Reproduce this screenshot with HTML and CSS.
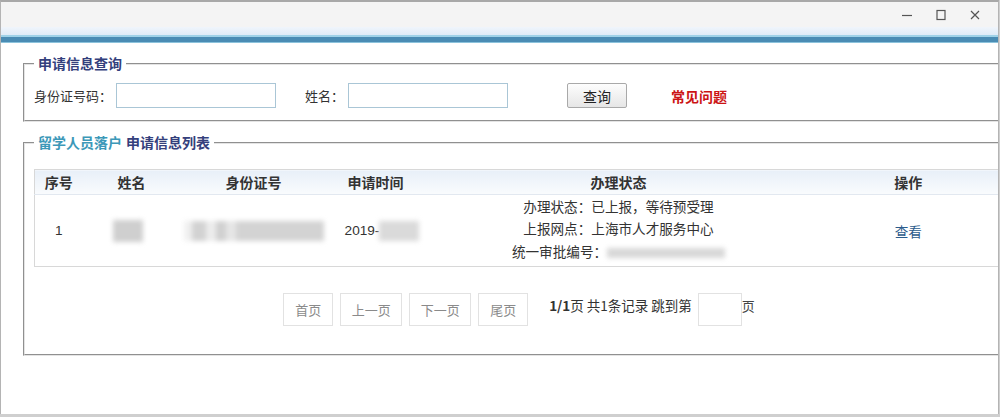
FILE: index.html
```html
<!DOCTYPE html>
<html lang="zh-CN">
<head>
    <meta charset="UTF-8">
    <title>申请信息查询</title>
    <link rel="stylesheet" href="styles.css">
</head>
<body>
<div class="window">
    <div class="titlebar">
        <span class="ctl">
            <svg width="12" height="12" viewBox="0 0 12 12"><path d="M1 6.5h10" stroke="#555" stroke-width="1.2"/></svg>
        </span>
        <span class="ctl">
            <svg width="12" height="12" viewBox="0 0 12 12"><rect x="2" y="1.5" width="8" height="9" fill="none" stroke="#555" stroke-width="1.2"/></svg>
        </span>
        <span class="ctl">
            <svg width="12" height="12" viewBox="0 0 12 12"><path d="M2 2l8 8M10 2l-8 8" stroke="#555" stroke-width="1.2"/></svg>
        </span>
    </div>
    <div class="strip"></div>
    <div class="bluebar"></div>

    <div class="content">
        <fieldset class="box">
            <legend><span class="dark">申请信息查询</span></legend>
            <div class="query-row">
                <label for="idno">身份证号码：</label>
                <input type="text" id="idno" class="txt">
                <label for="name" class="name-label">姓名：</label>
                <input type="text" id="name" class="txt">
                <button class="btn-query">查询</button>
                <a class="faq">常见问题</a>
            </div>
        </fieldset>

        <fieldset class="box list-box">
            <legend><span class="teal">留学人员落户</span> <span class="dark">申请信息列表</span></legend>
            <table class="grid">
                <colgroup>
                    <col style="width:48px">
                    <col style="width:98px">
                    <col style="width:146px">
                    <col style="width:98px">
                    <col style="width:388px">
                    <col style="width:192px">
                </colgroup>
                <thead>
                    <tr>
                        <th>序号</th>
                        <th>姓名</th>
                        <th>身份证号</th>
                        <th>申请时间</th>
                        <th>办理状态</th>
                        <th>操作</th>
                    </tr>
                </thead>
                <tbody>
                    <tr>
                        <td>1</td>
                        <td><span class="blur blur-name"></span></td>
                        <td><span class="blur blur-id"></span></td>
                        <td class="date">2019-<span class="blur blur-date"></span></td>
                        <td class="status">
                            办理状态：已上报，等待预受理<br>
                            上报网点：上海市人才服务中心<br>
                            统一审批编号：<span class="blur blur-no"></span>
                        </td>
                        <td><a class="view">查看</a></td>
                    </tr>
                </tbody>
            </table>

            <div class="pager">
                <button class="pg-btn pg-2">首页</button>
                <button class="pg-btn pg-3">上一页</button>
                <button class="pg-btn pg-3">下一页</button>
                <button class="pg-btn pg-2">尾页</button>
                <span class="pg-info"><b>1/1</b>页 共1条记录 跳到第</span>
                <input type="text" class="pg-jump">
                <span class="pg-unit">页</span>
            </div>
        </fieldset>
    </div>
</div>
</body>
</html>
```

FILE: styles.css
```css
body {
    margin: 0;
    background: #cfcfcf;
    font-family: "Liberation Sans", "Noto Sans CJK SC", sans-serif;
    font-size: 13px;
    color: #333;
}

.window {
    width: 997px;
    height: 412px;
    border-top: 2px solid #a8a8a8;
    border-left: 1px solid #b4b4b4;
    border-right: 1px solid #b4b4b4;
    background: #fff;
    overflow: hidden;
}

.titlebar {
    height: 25px;
    background: #f4f4f4;
    display: flex;
    justify-content: flex-end;
    align-items: center;
    padding-right: 6px;
}

.ctl {
    width: 34px;
    display: flex;
    justify-content: center;
}

.strip {
    height: 8px;
    background: linear-gradient(#f0f5fb, #dfebf7);
}

.bluebar {
    height: 5px;
    border-top: 2px solid #9fd2e8;
    border-bottom: 1px solid #8cc3dc;
    background: #4a8cb4;
}

.content {
    padding: 11px 0 0 22px;
}

.box {
    width: 1000px;
    margin: 0;
    padding: 9px 0 12px 9px;
    border: 2px groove #e4e4e4;
    box-sizing: border-box;
}

.box legend {
    padding: 0 4px;
    font-size: 14px;
    font-weight: bold;
    line-height: 20px;
}

.dark {
    color: #34407c;
}

.teal {
    color: #3c98b8;
}

.query-row {
    display: flex;
    align-items: center;
    height: 25px;
}

.query-row label {
    font-family: "Noto Sans CJK SC", sans-serif;
}

.txt {
    width: 160px;
    height: 25px;
    box-sizing: border-box;
    border: 1px solid #aac6d6;
    margin: 0 0 0 4px;
    padding: 0 4px;
}

.name-label {
    margin-left: 29px;
}

.btn-query {
    margin-left: 59px;
    width: 60px;
    height: 25px;
    font-family: "Noto Sans CJK SC", sans-serif;
    font-size: 14px;
    color: #222;
    background: linear-gradient(#fdfdfd, #e6e6e6);
    border: 1px solid #a9a9a9;
    border-radius: 2px;
    padding: 0;
}

.faq {
    margin-left: 44px;
    color: #cc1414;
    font-weight: bold;
    font-size: 14px;
}

.list-box {
    margin-top: 11px;
    padding: 16px 0 28px 9px;
}

.grid {
    width: 970px;
    border-collapse: collapse;
    table-layout: fixed;
    border: 1px solid #d8d8d8;
}

.grid th {
    height: 24px;
    padding: 0;
    font-size: 14px;
    color: #333;
    background: linear-gradient(#e8eff8, #f9fbfd);
    border-bottom: 1px solid #e2e8f0;
}

.grid td {
    height: 71px;
    padding: 0;
    text-align: center;
    font-size: 13.6px;
}

.blur {
    display: inline-block;
    vertical-align: middle;
    background: #cfcfcf;
    filter: blur(2.5px);
}

.blur-name {
    width: 30px;
    height: 22px;
    margin-right: 8px;
}

.blur-id {
    width: 140px;
    height: 20px;
    background: linear-gradient(90deg, #f0f0f0 0 8px, #d2d2d2 8px 22px, #ececec 22px 32px, #d0d0d0 32px 42px, #e6e6e6 42px 52px, #d3d3d3 52px);
}

.date {
    text-align: left;
    padding-left: 13px !important;
}

.blur-date {
    width: 40px;
    height: 20px;
    background: #dadada;
}

.status {
    line-height: 22.5px;
}

.blur-no {
    width: 118px;
    height: 10px;
    background: #d8d8d8;
}

.view {
    color: #2c5c8c;
}

.pager {
    width: 970px;
    margin-top: 26px;
    display: flex;
    justify-content: center;
    align-items: center;
    font-family: "Noto Sans CJK SC", sans-serif;
}

.pg-btn {
    height: 33px;
    margin-right: 7px;
    background: #fff;
    border: 1px solid #e2e2e2;
    color: #8a8a8a;
    font-family: "Noto Sans CJK SC", sans-serif;
    font-size: 13px;
    padding: 0;
}

.pg-2 {
    width: 50px;
}

.pg-3 {
    width: 62px;
}

.pg-info {
    margin-left: 14px;
    font-size: 13.5px;
    color: #333;
    margin-top: -9px;
}

.pg-jump {
    width: 44px;
    height: 33px;
    box-sizing: border-box;
    margin-left: 6px;
    border: 1px solid #e2e2e2;
}

.pg-unit {
    font-size: 13px;
    color: #444;
    margin-top: -9px;
}
```
